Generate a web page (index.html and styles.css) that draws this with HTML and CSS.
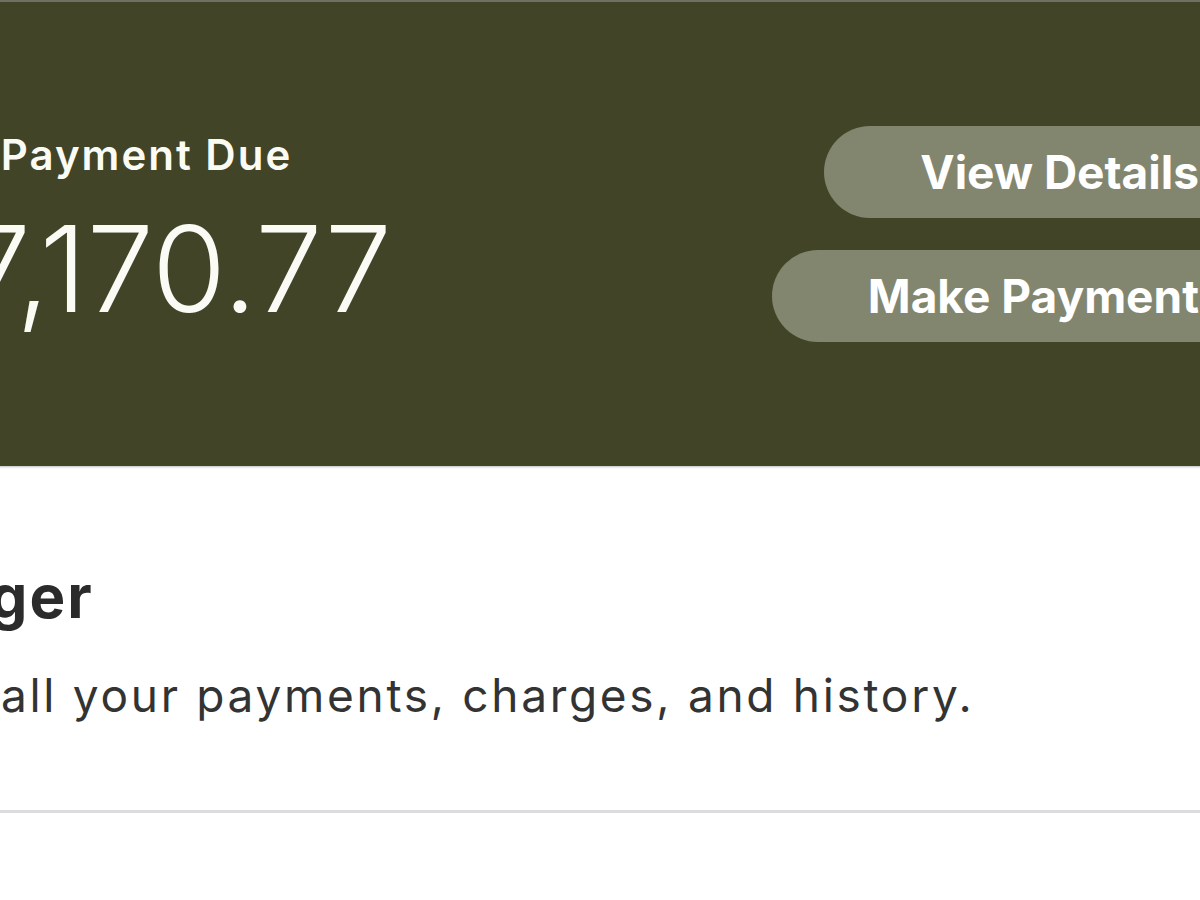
FILE: index.html
```html
<!DOCTYPE html>
<html lang="en">
<head>
<meta charset="utf-8">
<title>Payment Due</title>
<link rel="stylesheet" href="styles.css">
</head>
<body>
<div class="page">
  <section class="banner">
    <div class="due">
      <div class="due-label">Total Payment Due</div>
      <div class="due-amount">$7,170.77</div>
    </div>
    <div class="actions">
      <button class="pill">View Details</button>
      <button class="pill">Make Payment</button>
    </div>
  </section>
  <section class="intro">
    <h1 class="intro-title">Ledger</h1>
    <p class="intro-text">View all your payments, charges, and history.</p>
  </section>
  <hr class="divider">
</div>
</body>
</html>
```

FILE: styles.css
```css
html, body {
  margin: 0;
  padding: 0;
  background: #ffffff;
  overflow: hidden;
}
body {
  font-family: Inter, "Noto Sans", "Liberation Sans", sans-serif;
  width: 1200px;
  height: 900px;
}
.page {
  width: 1407px;
  margin-left: -112px;
}
.banner {
  height: 464px;
  border-top: 2px solid #6f7262;
  background: #414426;
  box-shadow: 0 1px 2px rgba(0,0,0,0.25);
  display: flex;
  align-items: center;
  justify-content: space-between;
}
.due {
  display: flex;
  flex-direction: column;
  color: #fbfbf6;
  margin-top: 3px;
}
.due-label {
  font-size: 42px;
  font-weight: 600;
  line-height: 48px;
  letter-spacing: 2px;
  margin-left: -10px;
}
.due-amount {
  font-size: 120px;
  font-weight: 300;
  line-height: 1.2;
  margin-top: 18px;
}
.actions {
  display: flex;
  flex-direction: column;
  align-items: flex-end;
  gap: 32px;
}
.pill {
  height: 92px;
  border: none;
  border-radius: 46px;
  background: #83866f;
  color: #ffffff;
  font-family: inherit;
  font-size: 46px;
  font-weight: 700;
  padding: 0 96px;
  line-height: 1;
}
.intro {
  padding: 94px 0 0 0;
}
.intro-title {
  margin: 0 0 0 -12px;
  font-size: 60px;
  font-weight: 700;
  line-height: 1.2;
  letter-spacing: 2px;
  color: #2b2b2b;
}
.intro-text {
  margin: 31px 0 0 -20px;
  font-size: 46px;
  font-weight: 400;
  line-height: 1.4;
  letter-spacing: 2.7px;
  color: #333333;
}
.divider {
  margin: 83px 0 0 0;
  border: none;
  height: 3px;
  background: #dcdcde;
}
```
